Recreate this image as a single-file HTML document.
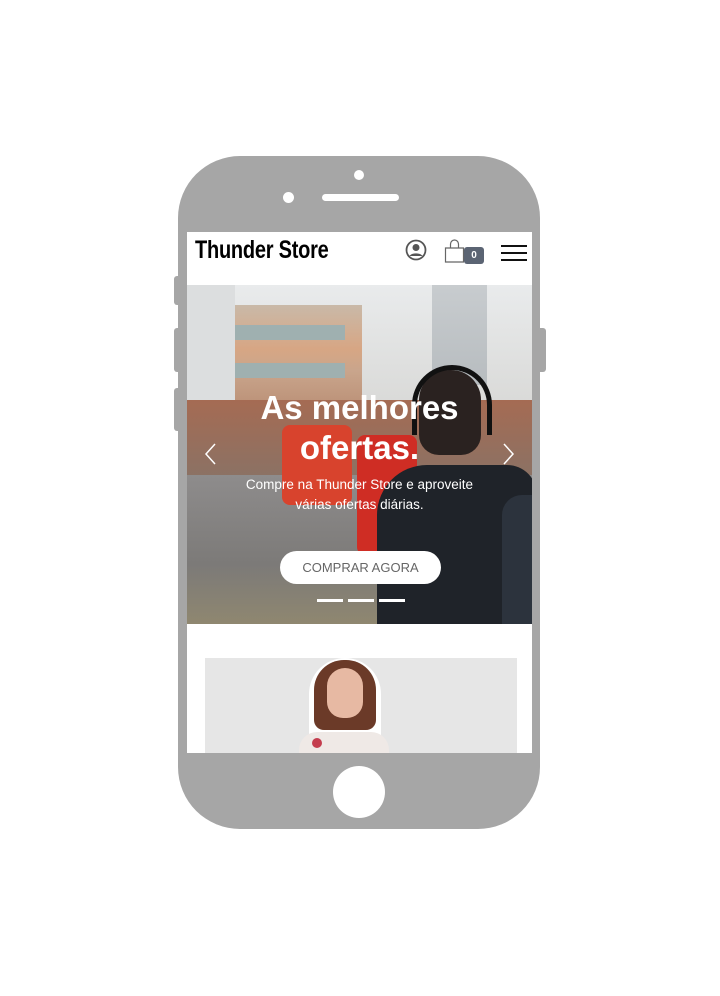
<!DOCTYPE html>
<html><head><meta charset="utf-8"><style>
*{margin:0;padding:0;box-sizing:border-box}
body{width:720px;height:996px;background:#fff;position:relative;overflow:hidden;font-family:"Liberation Sans",sans-serif}
.a{position:absolute}
.phone{left:178px;top:156px;width:362px;height:673px;background:#a6a6a6;border-radius:62px}
.btn{background:#a6a6a6;border-radius:3px}
.screen{left:187px;top:232px;width:345px;height:521px;background:#fff;overflow:hidden}
.hero{left:0;top:53px;width:345px;height:339px;overflow:hidden;background:#8a8a8a}
</style></head><body>
<div class="a btn" style="left:174px;top:276px;width:8px;height:29px"></div>
<div class="a btn" style="left:174px;top:328px;width:8px;height:44px"></div>
<div class="a btn" style="left:174px;top:388px;width:8px;height:43px"></div>
<div class="a btn" style="left:536px;top:328px;width:10px;height:44px"></div>
<div class="a phone"></div>
<div class="a" style="left:354px;top:170px;width:10px;height:10px;border-radius:50%;background:#fff"></div>
<div class="a" style="left:283px;top:192px;width:11px;height:11px;border-radius:50%;background:#fff"></div>
<div class="a" style="left:322px;top:194px;width:77px;height:7px;border-radius:4px;background:#fff"></div>
<div class="a" style="left:333px;top:766px;width:52px;height:52px;border-radius:50%;background:#fff"></div>
<div class="a screen">
 <div class="a" style="left:8px;top:4px;font-weight:bold;font-size:25px;letter-spacing:-0.3px;color:#000;transform:scaleX(0.8);transform-origin:left;white-space:nowrap">Thunder Store</div>
 <svg class="a" style="left:218px;top:7px" width="22" height="22" viewBox="0 0 22 22"><circle cx="11" cy="11" r="9.5" fill="none" stroke="#555" stroke-width="1.8"/><circle cx="11" cy="8.5" r="3.5" fill="#555"/><path d="M4.5 17c2-3.5 11-3.5 13 0z" fill="#555"/></svg>
 <svg class="a" style="left:257px;top:6px" width="22" height="26" viewBox="0 0 22 26"><path d="M1.5 10h18v14h-18z" fill="none" stroke="#666" stroke-width="1.2"/><path d="M6.5 10v-4a4 4 0 0 1 8 0v4" fill="none" stroke="#666" stroke-width="1.2"/></svg>
 <div class="a" style="left:277px;top:15px;width:20px;height:17px;background:#5b6473;border-radius:3px;color:#fff;font-size:10px;font-weight:bold;text-align:center;line-height:17px">0</div>
 <div class="a" style="left:314px;top:13px;width:26px;height:2px;background:#111"></div>
 <div class="a" style="left:314px;top:20px;width:26px;height:2px;background:#111"></div>
 <div class="a" style="left:314px;top:27px;width:26px;height:2px;background:#111"></div>
 <div class="a hero">
  <div class="a" style="left:0;top:0;width:345px;height:130px;background:linear-gradient(#e9ebec,#d8d8d6)"></div>
  <div class="a" style="left:45px;top:20px;width:130px;height:110px;background:linear-gradient(#c9b9a8 0,#d7a684 40%,#c9a58c 60%,#b88c72)"></div>
  <div class="a" style="left:48px;top:40px;width:110px;height:15px;background:#9fb0b0"></div>
  <div class="a" style="left:48px;top:78px;width:110px;height:15px;background:#9fb0b0"></div>
  <div class="a" style="left:0;top:0;width:48px;height:140px;background:#dcdedf"></div>
  <div class="a" style="left:245px;top:0;width:55px;height:100px;background:linear-gradient(#c8cccf,#b7bcbf)"></div>
  <div class="a" style="left:0;top:115px;width:345px;height:80px;background:linear-gradient(#a56b53,#8a7265)"></div>
  <div class="a" style="left:0;top:190px;width:345px;height:149px;background:linear-gradient(#8e8c8c,#7c7a78 60%,#8f8770)"></div>
  <div class="a" style="left:95px;top:140px;width:70px;height:80px;background:#d8432d;border-radius:8px"></div>
  <div class="a" style="left:170px;top:150px;width:60px;height:120px;background:#cf2d24;border-radius:8px"></div>
  <div class="a" style="left:190px;top:180px;width:160px;height:160px;background:#1f2329;border-radius:50px 30px 0 0"></div>
  <div class="a" style="left:315px;top:210px;width:35px;height:130px;background:#2c333d;border-radius:20px 0 0 0"></div>
  <div class="a" style="left:232px;top:85px;width:62px;height:85px;background:#2a2220;border-radius:30px 30px 20px 20px"></div>
  <div class="a" style="left:225px;top:80px;width:80px;height:70px;border:5px solid #111;border-bottom:none;border-radius:40px 40px 0 0"></div>
  <div class="a" style="left:0;top:103px;width:345px;text-align:center;color:#fff;font-weight:bold;font-size:33px;line-height:40px">As melhores<br>ofertas.</div>
  <div class="a" style="left:0;top:190px;width:345px;text-align:center;color:#fff;font-size:13.5px;line-height:20px">Compre na Thunder Store e aproveite<br>várias ofertas diárias.</div>
  <div class="a" style="left:93px;top:266px;width:161px;height:33px;background:#fff;border-radius:17px;text-align:center;line-height:33px;color:#666;font-size:13px">COMPRAR AGORA</div>
  <div class="a" style="left:130px;top:314px;width:26px;height:3px;background:#fff"></div>
  <div class="a" style="left:161px;top:314px;width:26px;height:3px;background:#fff"></div>
  <div class="a" style="left:192px;top:314px;width:26px;height:3px;background:#fff"></div>
  <svg class="a" style="left:16px;top:157px" width="14" height="24"><path d="M12 2L3 12l9 10" fill="none" stroke="#fff" stroke-width="1.5"/></svg>
  <svg class="a" style="left:315px;top:157px" width="14" height="24"><path d="M2 2l9 10-9 10" fill="none" stroke="#fff" stroke-width="1.5"/></svg>
 </div>
 <div class="a" style="left:18px;top:426px;width:312px;height:100px;background:#e6e6e6"></div>
 <div class="a" style="left:122px;top:426px;width:72px;height:100px;background:#fff;border-radius:36px 36px 0 0"></div>
 <div class="a" style="left:127px;top:428px;width:62px;height:70px;background:#6b3a28;border-radius:30px 30px 10px 10px"></div>
 <div class="a" style="left:140px;top:436px;width:36px;height:50px;background:#e7b9a3;border-radius:18px 18px 16px 16px"></div>
 <div class="a" style="left:112px;top:500px;width:90px;height:30px;background:#efe9e6;border-radius:18px 18px 0 0"></div>
 <div class="a" style="left:125px;top:506px;width:10px;height:10px;background:#c43d4e;border-radius:50%"></div>
</div>
</body></html>
